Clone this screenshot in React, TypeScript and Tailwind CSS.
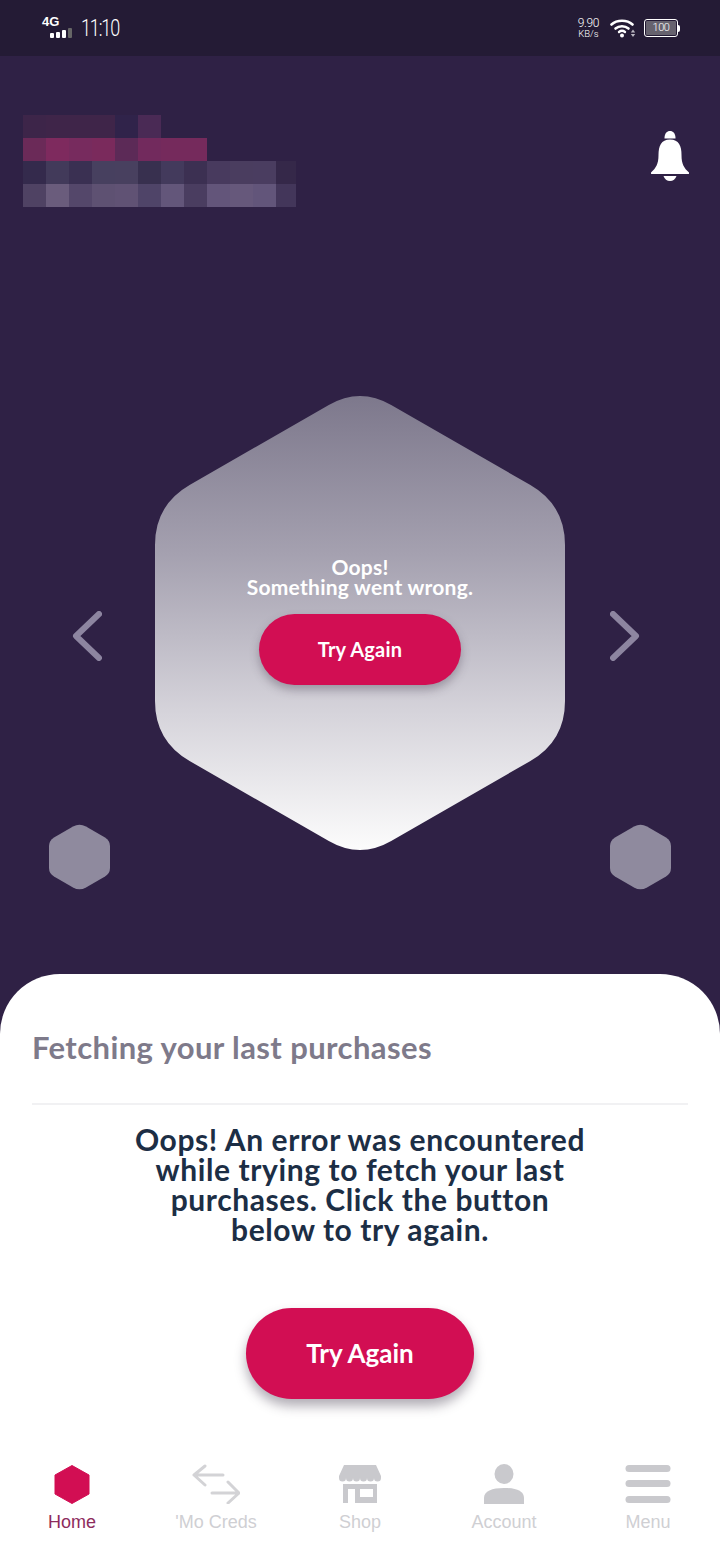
import React from 'react';

const mosaic: string[][] = [
    ['bg-[#3d2549]', 'bg-[#3f2549]', 'bg-[#3f2549]', 'bg-[#3f2549]', 'bg-[#30234a]', 'bg-[#4a2a55]', 'bg-transparent', 'bg-transparent', 'bg-transparent', 'bg-transparent', 'bg-transparent', 'bg-transparent'],
    ['bg-[#6b2a58]', 'bg-[#7e2a5e]', 'bg-[#772b5e]', 'bg-[#7a2a5c]', 'bg-[#5c2a57]', 'bg-[#722a5d]', 'bg-[#752a5c]', 'bg-[#752a5c]', 'bg-transparent', 'bg-transparent', 'bg-transparent', 'bg-transparent'],
    ['bg-[#342a4c]', 'bg-[#423a5a]', 'bg-[#3a3052]', 'bg-[#47405f]', 'bg-[#48405f]', 'bg-[#38304f]', 'bg-[#433a5c]', 'bg-[#3c3052]', 'bg-[#483a5e]', 'bg-[#4a3d5f]', 'bg-[#4a3d60]', 'bg-[#352849]'],
    ['bg-[#4f4263]', 'bg-[#6a5c7c]', 'bg-[#54476a]', 'bg-[#5e5172]', 'bg-[#605274]', 'bg-[#4f4468]', 'bg-[#63567a]', 'bg-[#4a3d60]', 'bg-[#63557a]', 'bg-[#66587b]', 'bg-[#62557a]', 'bg-[#43365a]'],
];

const StatusBar = () => (
    <div className="h-14 bg-[#241b35] flex items-center justify-between pl-[42px] pr-[40px] text-white shrink-0">
        <div className="flex items-center">
            <div className="w-[32px] h-[24px] flex flex-col">
                <span className="text-[13px] leading-[11px] font-bold font-['Liberation_Sans',sans-serif]">4G</span>
                <svg width="32" height="12" viewBox="0 0 32 12" className="mt-px">
                    <rect x="8" y="5" width="4" height="5" rx="1" fill="#fff" />
                    <rect x="14" y="4" width="4" height="6" rx="1" fill="#fff" />
                    <rect x="20" y="2" width="4" height="8" rx="1" fill="#fff" />
                    <rect x="26" y="0" width="4" height="10" rx="1" fill="#666" />
                </svg>
            </div>
            <span className="ml-[7px] inline-block origin-left scale-x-[0.75] text-[24px] font-light tracking-[-1.5px] font-['Roboto',sans-serif]">11:10</span>
        </div>
        <div className="flex items-center">
            <div className="flex flex-col items-center font-['Roboto',sans-serif] font-light mr-[11px]">
                <span className="text-[12px] leading-[11px] tracking-[-0.4px]">9.90</span>
                <span className="text-[9.5px] leading-[10px]">KB/s</span>
            </div>
            <svg width="26" height="20" viewBox="0 0 26 20" className="mr-[8px]">
                <path d="M1.5 6.5C7 1.5 17 1.5 22.5 6.5" fill="none" stroke="#fff" strokeWidth="2.6" strokeLinecap="round" />
                <path d="M5.5 10.5C9 7.5 15 7.500 18.5 10.5" fill="none" stroke="#fff" strokeWidth="2.6" strokeLinecap="round" />
                <path d="M9 14C10.8 12.6 13.2 12.6 15 14" fill="none" stroke="#fff" strokeWidth="2.4" strokeLinecap="round" />
                <circle cx="12" cy="17.5" r="2" fill="#fff" />
                <path d="M23 11.5l2.2 3h-4.4zM23 19l2.2-3h-4.4z" fill="#b9b6c0" />
            </svg>
            <div className="flex items-center">
                <div className="w-[34px] h-[18px] rounded-[3px] border border-white p-px flex">
                    <div className="flex-1 bg-[#66626e] rounded-[1px] flex items-center justify-center text-[11px] font-light tracking-[-0.4px] font-['Roboto',sans-serif]">100</div>
                </div>
                <div className="w-[2px] h-[7px] bg-white rounded-r-sm" />
            </div>
        </div>
    </div>
);

const Header = () => (
    <div className="h-[340px] pt-[59px] pl-[23px] pr-[31px] flex justify-between items-start shrink-0">
        <div className="flex flex-col">
            {mosaic.map((row, i) => (
                <div key={i} className="flex h-[23px]">
                    {row.map((c, j) => (
                        <div key={j} className={`${c} ${j === 11 ? 'w-[20px]' : 'w-[23px]'}`} />
                    ))}
                </div>
            ))}
        </div>
        <svg width="38" height="50" viewBox="0 0 38 50" className="mt-[16px]">
            <path d="M13.5 7.5C13.5 2 16 0 19 0s5.500 2 5.500 7.500z" fill="#fff" />
            <path d="M19 8.500C10 8.500 7.500 15 7.500 24 7.500 33 5 37 0 41.500c-.6.700 0 1.500 1 1.500h36c1 0 1.600-.8 1-1.500C33 37 30.500 33 30.500 24 30.500 15 28 8.500 19 8.500z" fill="#fff" />
            <path d="M12.500 45h13C24.500 48 22 50 19 50s-5.500-2-6.500-5z" fill="#fff" />
        </svg>
    </div>
);

const SmallHex = () => (
    <svg width="61" height="66" viewBox="0 0 61 66">
        <path d="M24 2.500Q30.500-1.200 37 2.500L56 13.500Q61 16.500 61 22L61 44Q61 49.500 56 52.500L37 63.500Q30.500 67.200 24 63.500L5 52.500Q0 49.500 0 44L0 22Q0 16.500 5 13.500Z" fill="#8f8a9e" />
    </svg>
);

const Hero = () => (
    <div className="h-[578px] grid grid-cols-[155px_410px_155px] shrink-0">
        <div className="flex flex-col items-start pt-[215px] pl-[49px]">
            <svg width="30" height="50" viewBox="0 0 30 50" className="ml-[23px]">
                <path d="M27 3L4 25L27 47" fill="none" stroke="#8d85a0" strokeWidth="6" strokeLinecap="round" strokeLinejoin="round" />
            </svg>
            <div className="mt-[163px]"><SmallHex /></div>
        </div>
        <div className="relative h-[454px] flex flex-col items-center pt-[161px]">
            <svg width="410" height="454" viewBox="0 0 410 454" className="absolute inset-0">
                <defs>
                    <linearGradient id="hexFill" x1="0" y1="0" x2="0" y2="1">
                        <stop offset="0" stopColor="#7d788c" />
                        <stop offset="0.35" stopColor="#a5a1b0" />
                        <stop offset="0.7" stopColor="#d6d4db" />
                        <stop offset="1" stopColor="#fcfcfc" />
                    </linearGradient>
                </defs>
                <path d="M173.800 9Q205-9 236.200 9L375.400 89Q410 109 410 149L410 305Q410 345 375.400 365L236.200 445Q205 463 173.800 445L34.600 365Q0 345 0 305L0 149Q0 109 34.600 89Z" fill="url(#hexFill)" />
            </svg>
            <div className="relative text-center text-white font-bold text-[21px] tracking-[0.25px] leading-[20px] font-['Lato',sans-serif]">
                Oops!<br />Something went wrong.
            </div>
            <button className="relative mt-[17px] w-[202px] h-[71px] pb-0.5 rounded-full bg-[#d20e53] text-white font-bold text-[20px] tracking-[0.2px] font-['Lato',sans-serif] shadow-[0_5px_10px_rgba(60,50,70,0.35)]">
                Try Again
            </button>
        </div>
        <div className="flex flex-col items-start pt-[215px] pl-[45px]">
            <svg width="30" height="50" viewBox="0 0 30 50">
                <path d="M3 3L26 25L3 47" fill="none" stroke="#8d85a0" strokeWidth="6" strokeLinecap="round" strokeLinejoin="round" />
            </svg>
            <div className="mt-[163px]"><SmallHex /></div>
        </div>
    </div>
);

const navItems = [
    {
        label: 'Home',
        color: 'text-[#8e2c5d]',
        icon: <path d="M24 1.500L41 11V30L24 39.500L7 30V11Z" fill="#d20e53" stroke="#d20e53" strokeWidth="1" strokeLinejoin="round" />,
    },
    {
        label: "'Mo Creds",
        color: 'text-[#cfcfd3]',
        icon: (
            <g fill="none" stroke="#d3d3d6" strokeWidth="3" strokeLinecap="round" strokeLinejoin="round">
                <path d="M31 11H2M13 2L2 11L13 21" />
                <path d="M20 29H47M36 18L47 29L36 39" />
            </g>
        ),
    },
    {
        label: 'Shop',
        color: 'text-[#cfcfd3]',
        icon: (
            <g fill="#c9c9cd">
                <path d="M8 1H40L45 12V14A3.500 3.500 0 0 1 38 14A3.500 3.500 0 0 1 31 14A3.500 3.500 0 0 1 24 14A3.500 3.500 0 0 1 17 14A3.500 3.500 0 0 1 10 14A3.500 3.500 0 0 1 3 14V12Z" />
                <path fillRule="evenodd" d="M7 20H41V39H7ZM12 25V39H19V25ZM24 25V33H37V25Z" />
            </g>
        ),
    },
    {
        label: 'Account',
        color: 'text-[#cfcfd3]',
        icon: (
            <g fill="#c9c9cd">
                <ellipse cx="24" cy="10" rx="9.500" ry="10" />
                <path d="M4 40V34C4 27 12 24 24 24C36 24 44 27 44 34V40Z" />
            </g>
        ),
    },
    {
        label: 'Menu',
        color: 'text-[#cfcfd3]',
        icon: (
            <g fill="#c9c9cd">
                <rect x="1.500" y="1" width="45" height="7" rx="3.500" />
                <rect x="1.500" y="16" width="45" height="7" rx="3.500" />
                <rect x="1.500" y="32" width="45" height="7" rx="3.500" />
            </g>
        ),
    },
];

const BottomSheet = () => (
    <div className="flex-1 bg-white rounded-t-[60px] pt-[55px] flex flex-col font-['Lato',sans-serif]">
        <h2 className="px-8 text-[31px] tracking-[0.4px] leading-[36px] font-bold text-[#7e7a8a]">Fetching your last purchases</h2>
        <div className="mx-8 mt-[38px] h-[2px] bg-[#f1f1f3]" />
        <p className="mt-[19px] mx-auto w-[460px] text-center text-[30px] tracking-[0.6px] leading-[30px] font-bold text-[#1c2e45]">
            Oops! An error was encountered while trying to fetch your last purchases. Click the button below to try again.
        </p>
        <button className="mt-[64px] mx-auto w-[228px] h-[91px] rounded-full bg-[#d20e53] text-white font-bold text-[26px] shadow-[0_7px_12px_rgba(60,50,70,0.4)]">
            Try Again
        </button>
        <nav className="mt-[65px] grid grid-cols-5">
            {navItems.map(item => (
                <div key={item.label} className="flex flex-col items-center">
                    <svg width="48" height="40" viewBox="0 0 48 40">{item.icon}</svg>
                    <span className={`mt-[6px] text-[18px] leading-[24px] font-['Liberation_Sans',sans-serif] ${item.color}`}>{item.label}</span>
                </div>
            ))}
        </nav>
    </div>
);

export default function App() {
    return (
        <div className="w-[720px] h-[1544px] bg-[#2f2145] flex flex-col overflow-hidden">
            <StatusBar />
            <Header />
            <Hero />
            <BottomSheet />
        </div>
    );
}
